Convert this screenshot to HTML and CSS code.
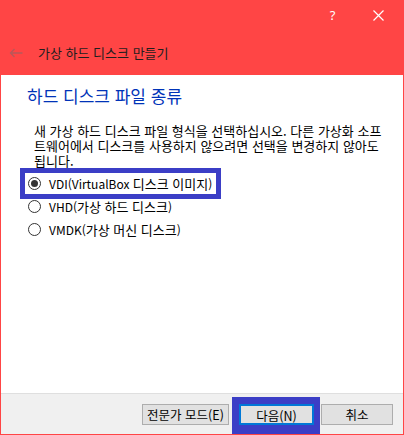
FILE: index.html
```html
<!DOCTYPE html>
<html lang="ko">
  <head>
    <meta charset="UTF-8" />
    <title>가상 하드 디스크 만들기</title>
    <link rel="stylesheet" href="styles.css">
  </head>
  <body>
    <div class="window">
      <div class="titlebar">
        <div class="caption-buttons">
          <span class="caption-btn help">?</span>
          <span class="caption-btn close">
            <svg width="11" height="11" viewBox="0 0 11 11">
              <path d="M0.5 0.5 L10.5 10.5 M10.5 0.5 L0.5 10.5" stroke="#fff" stroke-width="1.2" fill="none" />
            </svg>
          </span>
        </div>
        <div class="wizard-title">
          <svg class="back" width="14" height="10" viewBox="0 0 14 10">
            <path d="M13.5 5 H1.5 M5.5 1 L1.5 5 L5.5 9" stroke="#b8585a" stroke-width="1.3" fill="none" />
          </svg>
          <span>가상 하드 디스크 만들기</span>
        </div>
      </div>

      <div class="content">
        <h3 class="page-heading">하드 디스크 파일 종류</h3>
        <p class="intro">
          새 가상 하드 디스크 파일 형식을 선택하십시오. 다른 가상화 소프트웨어에서 디스크를 사용하지 않으려면 선택을 변경하지 않아도 됩니다.
        </p>
        <div class="options">
          <label class="option selected">
            <input type="radio" name="fmt" checked />
            <span>VDI(VirtualBox <span class="ko">디스크 이미지</span>)</span>
          </label>
          <label class="option">
            <input type="radio" name="fmt" />
            <span>VHD(<span class="ko">가상 하드 디스크</span>)</span>
          </label>
          <label class="option">
            <input type="radio" name="fmt" />
            <span>VMDK(<span class="ko">가상 머신 디스크</span>)</span>
          </label>
        </div>
      </div>

      <div class="footer">
        <button class="btn expert">전문가 모드(E)</button>
        <span class="next-wrap">
          <button class="btn next">다음(N)</button>
        </span>
        <button class="btn cancel">취소</button>
      </div>
    </div>
  </body>
</html>
```

FILE: styles.css
```css
body {
  margin: 0;
  font-family: "Noto Sans CJK KR", "Noto Sans", sans-serif;
  font-size: 12px;
  color: #000;
}
.window {
  width: 404px;
  height: 435px;
  box-sizing: border-box;
  background-color: #ff4545;
  padding: 0 1px 1px 1px;
  display: flex;
  flex-direction: column;
}
.titlebar {
  height: 75px;
  display: flex;
  flex-direction: column;
}
.caption-buttons {
  height: 30px;
  display: flex;
  justify-content: flex-end;
  align-items: center;
}
.caption-btn {
  width: 45px;
  height: 30px;
  display: flex;
  justify-content: center;
  align-items: center;
  color: #fff;
}
.help {
  font-family: "Segoe UI", "Noto Sans", sans-serif;
  font-size: 13px;
  margin-right: 1px;
}
.close {
  margin-right: 2px;
}
.wizard-title {
  display: flex;
  align-items: center;
  height: 46px;
  padding-left: 8px;
  font-size: 13px;
  color: #1e1e1e;
}
.wizard-title .back {
  margin-right: 15px;
}
.content {
  background-color: #fff;
  height: 318px;
  box-sizing: border-box;
  padding: 10px 0 0 26px;
}
.page-heading {
  margin: 0;
  font-size: 17px;
  line-height: 22px;
  font-weight: normal;
  color: #0033b8;
}
.intro {
  margin: 16px 0 0 0;
  padding-left: 7px;
  width: 350px;
  font-size: 13px;
  line-height: 15px;
}
.options {
  margin-top: 4px;
  display: flex;
  flex-direction: column;
}
.option {
  display: flex;
  align-items: center;
  height: 23px;
  width: max-content;
  padding-right: 4px;
}
.option .ko {
  font-size: 13px;
}
.option.selected {
  outline: 5px solid #3b3ec6;
  outline-offset: -1px;
  margin-left: -3px;
  padding-left: 3px;
  padding-right: 5px;
}
.option input {
  appearance: none;
  -webkit-appearance: none;
  width: 13px;
  height: 13px;
  margin: 0 8px 0 1px;
  border: 1px solid #333;
  border-radius: 50%;
  background: #fff;
  display: flex;
  justify-content: center;
  align-items: center;
}
.option input:checked::after {
  content: "";
  width: 7px;
  height: 7px;
  border-radius: 50%;
  background: #333;
}
.footer {
  flex: 1;
  background-color: #f0f0f0;
  border-top: 1px solid #dfdfdf;
  display: flex;
  align-items: center;
  justify-content: flex-end;
  padding-right: 10px;
}
.btn {
  height: 21px;
  box-sizing: border-box;
  border: 1px solid #adadad;
  background-color: #e1e1e1;
  font-family: "Noto Sans CJK KR", "Noto Sans", sans-serif;
  font-size: 12.5px;
  padding: 0;
  color: #000;
}
.expert {
  width: 87px;
}
.next-wrap {
  margin-left: 3px;
  background-color: #3b3ec6;
  padding: 7px 6px 9px 7px;
  display: flex;
  align-self: flex-end;
}
.next {
  width: 75px;
  border: 2px solid #0078d7;
}
.cancel {
  width: 72px;
  margin-left: 1px;
}
```
